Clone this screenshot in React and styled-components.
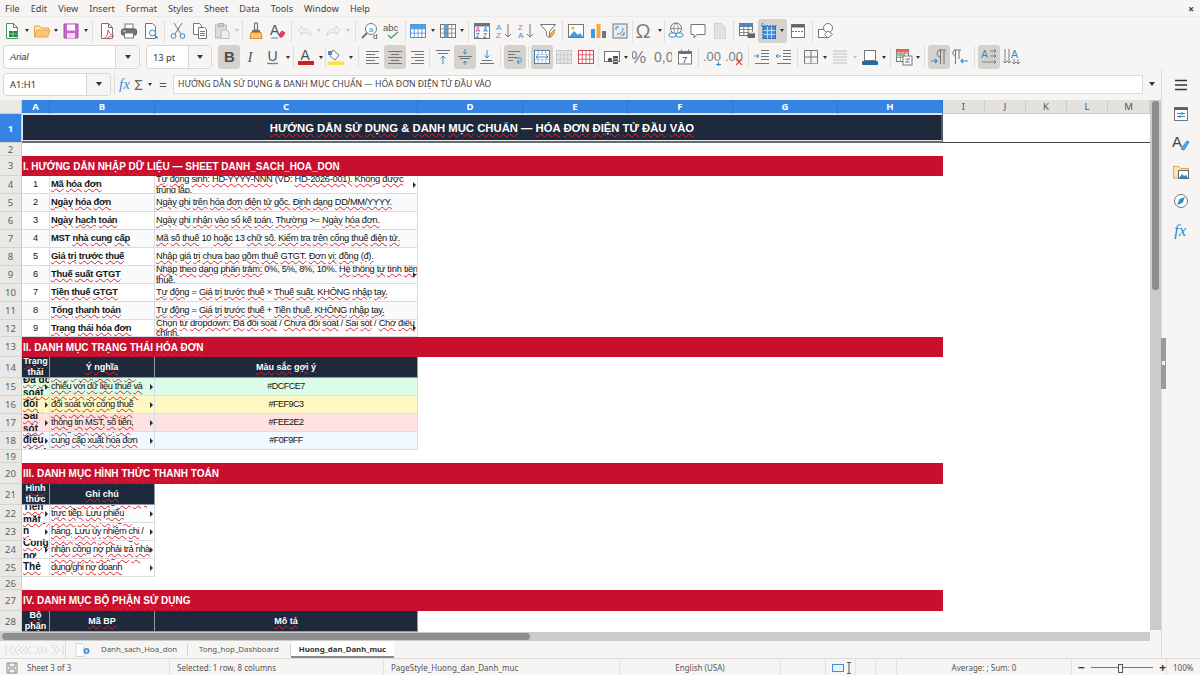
import React from "react";
import styled, { createGlobalStyle } from "styled-components";

const GlobalStyle = createGlobalStyle`
  html, body { margin: 0; padding: 0; background: #f6f5f4; }
  body { font-family: "Noto Sans", "Open Sans", sans-serif; overflow: hidden; }
  * { box-sizing: border-box; }
`;

const Window = styled.div`
  width: 1200px;
  height: 675px;
  display: flex;
  flex-direction: column;
  overflow: hidden;
  background: #f6f5f4;
  color: #3d3d3d;
`;

const MenuBar = styled.div`
  height: 17px;
  display: flex;
  align-items: center;
  padding-left: 5px;
  gap: 11px;
  font-size: 9.2px;
  color: #444;
  border-bottom: 1px solid #ecebe8;
  position: relative;
`;
const CloseMark = styled.span`
  position: absolute;
  right: 6px;
  top: 2px;
  font-size: 10px;
  font-weight: 700;
  color: #333;
`;

const ToolRow = styled.div`
  height: ${(p) => p.$h}px;
  display: flex;
  align-items: center;
  padding-left: ${(p) => p.$pad}px;
`;
const ToolBtn = styled.div`
  width: ${(p) => p.$w || 22}px;
  height: 24px;
  flex: none;
  display: flex;
  align-items: center;
  justify-content: ${(p) => (p.$w ? "flex-start" : "center")};
  padding-left: ${(p) => (p.$w ? 2 : 0)}px;
  border-radius: 3px;
  background: ${(p) => (p.$on ? "#d5d2ce" : "transparent")};
`;
const Caret = styled.span`
  flex: none;
  width: 7.5px;
  display: flex;
  justify-content: center;
  &::before {
    content: "";
    border-left: 2.5px solid transparent;
    border-right: 2.5px solid transparent;
    border-top: 3px solid ${(p) => (p.$off ? "#c4c4c4" : "#333")};
  }
`;
const ToolSep = styled.span`
  flex: none;
  width: ${(p) => p.$w}px;
  height: 22px;
  display: flex;
  justify-content: center;
  &::before {
    content: "";
    width: 1px;
    background: #e2e0dc;
  }
`;

const ComboBox = styled.div`
  width: ${(p) => p.$w}px;
  margin-right: ${(p) => p.$mr || 0}px;
  height: ${(p) => p.$h || 24}px;
  flex: none;
  display: flex;
  border: 1px solid #d8d6d2;
  border-radius: 4px;
  background: #fff;
  overflow: hidden;
`;
const ComboText = styled.div`
  flex: 1;
  display: flex;
  align-items: center;
  padding-left: ${(p) => p.$pad || 6}px;
  font-family: ${(p) => (p.$italic ? '"Liberation Sans", Arial, sans-serif' : "inherit")};
  font-style: ${(p) => (p.$italic ? "italic" : "normal")};
  font-size: 9.3px;
  color: #333;
`;
const ComboDrop = styled.div`
  width: ${(p) => p.$w}px;
  flex: none;
  display: flex;
  align-items: center;
  justify-content: center;
  background: #f6f5f4;
  border-left: 1px solid #d8d6d2;
  &::before {
    content: "";
    border-left: 3.5px solid transparent;
    border-right: 3.5px solid transparent;
    border-top: 4px solid #333;
  }
`;

const FormulaBar = styled.div`
  height: 28px;
  display: flex;
  align-items: center;
  padding: 0 0 0 3px;
  position: relative;
`;
const FormulaSep = styled.span`
  width: 1px;
  height: 20px;
  margin: 0 3px 0 3px;
  background: #dedcd8;
`;
const FormulaInput = styled.div`
  width: 970px;
  height: 19px;
  margin-left: 0.5px;
  display: flex;
  align-items: center;
  padding-left: 4px;
  background: #fff;
  border: 1px solid #dcdad6;
  font-size: 8.65px;
  color: #444;
  white-space: nowrap;
`;
const FormulaGlyph = styled.span`
  flex: none;
  width: ${(p) => p.$w}px;
  text-align: center;
  font-family: ${(p) => (p.$serif ? '"Liberation Serif", serif' : "inherit")};
  font-style: ${(p) => (p.$serif ? "italic" : "normal")};
  font-size: ${(p) => p.$size}px;
  color: ${(p) => p.$color};
`;
const FormulaEnd = styled(Caret)`
  width: 18px;
  &::before {
    border-left-width: 3.5px;
    border-right-width: 3.5px;
    border-top-width: 4px;
  }
`;

const Workspace = styled.div`
  flex: 1;
  min-height: 0;
  display: flex;
  position: relative;
  padding-top: 2px;
`;
const SheetColumn = styled.div`
  width: 1150px;
  display: flex;
  flex-direction: column;
`;
const SheetGrid = styled.div`
  height: 532px;
  flex: none;
  overflow: hidden;
  display: grid;
  background: #fff;
  grid-template-columns: 22px 28px 105px 263px repeat(5, 105px) 42px 41px 41px 41px 42px;
  grid-template-rows: 14px 29px 13px 20px repeat(8, 18px) 17px 20px 21px repeat(4, 18px) 13px 21px 21px repeat(4, 18px) 13px 21px 21px;
`;
const Corner = styled.div`
  background: #e9e8e5;
  border-right: 1px solid #cfcdc9;
  border-bottom: 1px solid #cfcdc9;
`;
const ColHead = styled.div`
  display: flex;
  align-items: center;
  justify-content: center;
  font-size: 9.6px;
  font-weight: ${(p) => (p.$on ? 700 : 400)};
  color: ${(p) => (p.$on ? "#fff" : "#555")};
  background: ${(p) => (p.$on ? "#3584e4" : "#e3e2df")};
  border-right: 1px solid ${(p) => (p.$on ? "#2f76cf" : "#cfcdc9")};
  border-bottom: 1px solid ${(p) => (p.$on ? "#cfe0f6" : "#cfcdc9")};
`;
const RowHead = styled.div`
  grid-column: 1;
  display: flex;
  align-items: center;
  justify-content: center;
  font-size: 9.6px;
  font-weight: ${(p) => (p.$on ? 700 : 400)};
  color: ${(p) => (p.$on ? "#fff" : "#5f5f5f")};
  background: ${(p) => (p.$on ? "#3584e4" : "#e9e8e5")};
  border-right: 1px solid #cfcdc9;
  border-bottom: 1px solid #d6d4d0;
`;
const TitleCell = styled.div`
  grid-column: 2 / 10;
  display: flex;
  align-items: center;
  justify-content: center;
  margin-bottom: 2px;
  background: #1e293b;
  border: 1px solid #e6ebf2;
  border-right: 2px solid #50565e;
  box-shadow: 0 2px 0 #6a6a6a;
  color: #fff;
  font-family: "Liberation Sans", Arial, sans-serif;
  font-size: 11.3px;
  font-weight: 700;
`;
const TitleRest = styled.div`
  grid-column: 10 / 15;
  border-bottom: 1px solid #444;
`;
const Band = styled.div`
  grid-column: 2 / 10;
  display: flex;
  align-items: center;
  padding-left: 1px;
  background: #c8102e;
  color: #fff;
  font-family: "Liberation Sans", Arial, sans-serif;
  font-size: 10px;
  font-weight: 700;
`;
const HeadCell = styled.div`
  display: flex;
  align-items: center;
  justify-content: center;
  text-align: center;
  overflow: hidden;
  background: #1e293b;
  border-right: 1px solid #8e99a8;
  border-bottom: 1px solid #8e99a8;
  color: #fff;
  font-family: "Liberation Sans", Arial, sans-serif;
  font-size: 9px;
  line-height: 11px;
  font-weight: 700;
`;
const Cell = styled.div`
  position: relative;
  display: flex;
  align-items: center;
  justify-content: ${(p) => (p.$center ? "center" : "flex-start")};
  text-align: ${(p) => (p.$center ? "center" : "left")};
  overflow: hidden;
  padding: 0 1px;
  background: ${(p) => p.$bg || "#fff"};
  border-right: 1px solid #d9dee5;
  border-bottom: 1px solid #d9dee5;
  color: #141414;
  font-family: "Liberation Sans", Arial, sans-serif;
  font-size: ${(p) => p.$size || 9.3}px;
  letter-spacing: ${(p) => p.$track ?? -0.29}px;
  line-height: ${(p) => p.$line || 10.5}px;
  font-weight: ${(p) => (p.$bold ? 700 : 400)};
`;
const CellText = styled.span`
  display: block;
  flex: none;
  width: ${(p) => (p.$w ? `${p.$w}px` : "100%")};
  overflow-wrap: anywhere;
`;
const Squiggle = styled.span`
  text-decoration: underline wavy #d8242c;
  text-decoration-thickness: 1px;
  text-underline-offset: 1px;
`;
const More = styled.i`
  position: absolute;
  right: 1px;
  top: 50%;
  margin-top: -3px;
  border-top: 3px solid transparent;
  border-bottom: 3px solid transparent;
  border-left: 3px solid #2c2c2c;
`;

const HScroll = styled.div`
  height: 9px;
  flex: none;
  padding: 1px 2px;
  background: #cbcbcb;
  margin-right: -1px;
`;
const HThumb = styled.div`
  width: 528px;
  height: 7px;
  border-radius: 4px;
  background: #8e8e8e;
`;
const VScroll = styled.div`
  width: 11px;
  flex: none;
  padding: 1px 2px 0;
  background: linear-gradient(to bottom, #cbcbcb 0, #cbcbcb 530px, #f6f5f4 530px);
`;
const VThumb = styled.div`
  height: 189px;
  border-radius: 3px;
  background: #8e8e8e;
`;
const SideBar = styled.div`
  flex: 1;
  display: flex;
  flex-direction: column;
  align-items: center;
  gap: 7px;
  margin-top: -30px;
  padding-top: 4px;
  border-left: 1px solid #dedcd8;
  position: relative;
`;
const SideBtn = styled.div`
  width: 24px;
  height: 22px;
  display: flex;
  align-items: center;
  justify-content: center;
`;
const SideGrip = styled.div`
  position: absolute;
  left: -1px;
  top: 268px;
  width: 5px;
  height: 51px;
  background: #9a9a9a;
  &::after {
    content: "";
    position: absolute;
    left: 1px;
    top: 23px;
    width: 3px;
    height: 4px;
    background: #f2f2f2;
  }
`;

const TabBar = styled.div`
  height: 17px;
  flex: none;
  display: flex;
  align-items: stretch;
  padding-left: 5px;
  margin-right: 38px;
  border-right: 1px solid #dedcd8;
  font-size: 7.8px;
  color: #555;
`;
const TabNav = styled.div`
  width: 60px;
  display: flex;
  align-items: center;
`;
const TabAdd = styled.div`
  width: 26px;
  display: flex;
  align-items: center;
  padding-left: 9px;
  border-left: 1px solid #dedcd8;
`;
const SheetTab = styled.div`
  display: flex;
  align-items: center;
  padding: 0 ${(p) => p.$pad}px;
  background: ${(p) => (p.$on ? "#fff" : "transparent")};
  border-bottom: 2px solid ${(p) => (p.$on ? "#8a8a8a" : "transparent")};
  font-weight: ${(p) => (p.$on ? 700 : 400)};
  color: ${(p) => (p.$on ? "#333" : "#555")};
`;
const TabSep = styled.span`
  width: 1px;
  margin: 3px 0;
  background: #d2d0cc;
`;

const StatusBar = styled.div`
  height: 17px;
  flex: none;
  display: grid;
  grid-template-columns: 170px 214px 236px 161px 45px 30px 20px 21px 175px 95px 33px;
  border-top: 1px solid #dedcd8;
  font-size: 8px;
  color: #555;
`;
const StatusCell = styled.div`
  display: flex;
  align-items: center;
  justify-content: ${(p) => (p.$center ? "center" : "flex-start")};
  gap: ${(p) => p.$gap || 0}px;
  padding-left: ${(p) => p.$pad ?? 7}px;
  border-right: ${(p) => (p.$last ? "none" : "1px solid #e4e2de")};
  white-space: nowrap;
`;
const ZoomTrack = styled.div`
  flex: 1;
  height: 1px;
  margin: 0 6px;
  background: #777;
  position: relative;
  &::after {
    content: "";
    position: absolute;
    left: 27px;
    top: -3px;
    width: 3px;
    height: 7px;
    border: 1px solid #555;
    background: #f6f5f4;
  }
`;
const ZoomSign = styled.span`
  font-size: 12px;
  font-weight: 700;
  color: #333;
`;

const Svg = ({ w = 18, h = 18, children }) => (
  <svg width={w} height={h} viewBox={`0 0 ${w} ${h}`} fill="none" stroke="#72767c" strokeWidth="1">
    {children}
  </svg>
);

const Label = ({ x, y, size, color = "#555", weight = 400, family = "Liberation Sans", italic, children }) => (
  <text x={x} y={y} fontSize={size} fill={color} stroke="none" fontWeight={weight} fontFamily={family} fontStyle={italic ? "italic" : "normal"}>
    {children}
  </text>
);

const Lines = ({ rows, color = "#72767c" }) => rows.map(([x1, y, x2], i) => <path key={i} d={`M${x1} ${y}H${x2}`} stroke={color} />);

const gridLines = (x, y, w, h, cols, rows, color) => {
  const parts = [];
  for (let i = 1; i < cols; i++) parts.push(`M${x + (w * i) / cols} ${y}v${h}`);
  for (let i = 1; i < rows; i++) parts.push(`M${x} ${y + (h * i) / rows}h${w}`);
  return <path d={parts.join("")} stroke={color} strokeWidth="0.8" />;
};

const ICONS = {
  new: (<Svg><path d="M3.5 1.5h7l4 4v11h-11z" fill="#fff" stroke="#3f9f5a" /><path d="M10.5 1.5v4h4" stroke="#3f9f5a" /><rect x="6" y="9" width="8" height="6" fill="#2f7d46" stroke="none" /><path d="M6 12h8M10 9v6" stroke="#bfe3c9" strokeWidth="0.7" /></Svg>),
  open: (<Svg><path d="M1.5 15V4h5l2 2h7v2" fill="#fde3b0" stroke="#e3a64a" /><path d="M1.5 15l2.5-7h13l-2.5 7z" fill="#fcc877" stroke="#e3a64a" /></Svg>),
  save: (<Svg><path d="M2 2h14v14H2z" fill="#c766cf" stroke="#a94db2" /><rect x="5" y="2.5" width="8" height="6" fill="#fff" stroke="none" /><rect x="5" y="11" width="8" height="5" fill="#f3d9f5" stroke="none" /></Svg>),
  pdf: (<Svg><path d="M3.5 1.5h7l4 4v11h-11z" fill="#fff" /><path d="M10.5 1.5v4h4" /><path d="M7 16c2-2 3-5 3-8 1 3 3 5 6 6-3 0-6 1-8 3" stroke="#e25050" /></Svg>),
  print: (<Svg><rect x="5" y="2" width="8" height="5" fill="#fff" /><rect x="1.5" y="7" width="15" height="6" rx="1.5" fill="#6f767d" stroke="#565c62" /><rect x="4.5" y="11" width="9" height="5" fill="#fff" /><path d="M3.5 9h2" stroke="#fff" /></Svg>),
  preview: (<Svg><path d="M3.5 1.5h7l3 3v12h-10z" fill="#fff" /><circle cx="10.5" cy="11" r="3" fill="#fff" stroke="#2e8ccf" /><path d="M12.7 13.2l3 3" stroke="#2e8ccf" strokeWidth="1.6" /></Svg>),
  cut: (<Svg><path d="M5 1l7 11M13 1l-7 11" /><circle cx="4.5" cy="14" r="2.4" stroke="#2e8ccf" /><circle cx="13.5" cy="14" r="2.4" stroke="#2e8ccf" /></Svg>),
  copy: (<Svg><path d="M2.5 1.5h6l2 2v9h-8z" fill="#fff" /><path d="M7.5 5.5h6l2 2v9h-8z" fill="#fff" /><Lines rows={[[9, 9.5, 14], [9, 11.5, 14], [9, 13.5, 14]]} color="#2e8ccf" /></Svg>),
  paste: (<Svg><rect x="2.5" y="3" width="11" height="13" fill="#dcdcdc" stroke="#b9b9b9" /><rect x="5.5" y="1.5" width="5" height="3" fill="#c9c9c9" stroke="#b0b0b0" /><path d="M8 8h6l2 2v6.5H8z" fill="#efefef" stroke="#bbb" /></Svg>),
  brush: (<Svg><rect x="7.5" y="1" width="3" height="7" fill="#e8f0f8" stroke="#6b7178" /><rect x="5" y="8" width="8" height="2" fill="#6b7178" stroke="none" /><path d="M4 10.5h10l1 6H3z" fill="#f7c27a" stroke="#d68b2a" /></Svg>),
  clear: (<Svg><Label x="1" y="13" size="14" color="#4a5560">A</Label><path d="M2 16h7" stroke="#2e8ccf" /><path d="M10 13l3-4 3 2-3 4h-2z" fill="#e8455a" stroke="#c8324a" /></Svg>),
  undo: (<Svg><path d="M3 8l4-4v3c5 0 9 2 9 7-2-3-5-4-9-4v3z" stroke="#d4d4d4" /></Svg>),
  redo: (<Svg><path d="M15 8l-4-4v3c-5 0-9 2-9 7 2-3 5-4 9-4v3z" stroke="#d4d4d4" /></Svg>),
  find: (<Svg><circle cx="10" cy="7" r="5.5" fill="#fff" /><path d="M6 11l-5 5" strokeWidth="2" /><Label x="7.7" y="9.5" size="8" color="#2e8ccf">a</Label><Label x="12" y="17" size="8" color="#444">d</Label></Svg>),
  spell: (<Svg><Label x="0" y="9" size="9.5" color="#555">abc</Label><path d="M5 13l3 3 7-6" stroke="#3cab5a" strokeWidth="1.4" /></Svg>),
  rows: (<Svg><rect x="1.5" y="2.5" width="15" height="13" fill="#fff" stroke="#4a90d9" /><rect x="1.5" y="2.5" width="15" height="4.3" fill="#5ba3e6" stroke="none" />{gridLines(1.5, 2.5, 15, 13, 4, 3, "#4a90d9")}</Svg>),
  cols: (<Svg><rect x="1.5" y="2.5" width="15" height="13" fill="#fff" /><rect x="5.2" y="2.5" width="4" height="13" fill="#5ba3e6" stroke="none" />{gridLines(1.5, 2.5, 15, 13, 4, 3, "#7a8088")}</Svg>),
  sort: (<Svg><rect x="1.5" y="1.5" width="15" height="15" fill="#fff" /><rect x="1.5" y="1.5" width="15" height="3" fill="#6e7276" stroke="none" /><Label x="2.5" y="10" size="6.5" weight={700} color="#d25ac0">A</Label><Label x="2.5" y="16" size="6.5" weight={700} color="#3f8fdc">Z</Label><Label x="10" y="10" size="6.5" weight={700} color="#3f8fdc">A</Label><Label x="10" y="16" size="6.5" weight={700} color="#d25ac0">Z</Label></Svg>),
  az: (<Svg><Label x="1" y="8" size="8" color="#3f8fdc">A</Label><Label x="1" y="16" size="8" color="#d25ac0">Z</Label><path d="M13 2v13M10 12l3 3 3-3" /></Svg>),
  za: (<Svg><Label x="1" y="8" size="8" color="#d25ac0">Z</Label><Label x="1" y="16" size="8" color="#3f8fdc">A</Label><path d="M13 2v13M10 12l3 3 3-3" /></Svg>),
  filter: (<Svg><path d="M1.5 2.5h15l-6 7v6l-3-2v-4z" fill="#fff" /><path d="M11 16l1-5 4-4-1 5z" fill="#f6b04d" stroke="#e49a30" /></Svg>),
  image: (<Svg><rect x="1.5" y="2.5" width="15" height="13" fill="#fff" /><path d="M2 15l5-6 4 4 2-2 3 4z" fill="#3f9ae0" stroke="none" /><circle cx="6" cy="6" r="1.6" fill="#f4a93c" stroke="none" /></Svg>),
  chart: (<Svg><rect x="2" y="7" width="4" height="9" fill="#3f9ae0" stroke="none" /><rect x="7.5" y="2" width="4" height="14" fill="#f4a93c" stroke="none" /><rect x="13" y="9" width="4" height="7" fill="#6f757b" stroke="none" /></Svg>),
  pivot: (<Svg><rect x="2" y="2" width="14" height="14" fill="#ececec" /><path d="M5 5v3M5 5h3M13 13v-3M13 13h-3M6 12c4 0 6-2 6-6" stroke="#2e8ccf" /></Svg>),
  omega: (<Svg><Label x="-0.5" y="16" size="20" color="#7a7e84">Ω</Label></Svg>),
  link: (<Svg><circle cx="9" cy="6.5" r="5.5" /><path d="M3.5 6.5h11M9 1c-3 3-3 8 0 11M9 1c3 3 3 8 0 11" strokeWidth="0.7" /><rect x="2" y="11" width="7" height="4" rx="2" fill="#fff" stroke="#2e8ccf" /><rect x="9" y="11" width="7" height="4" rx="2" fill="#fff" stroke="#2e8ccf" /></Svg>),
  comment: (<Svg><path d="M2 2.5h14v10H8l-3 3.5v-3.5H2z" fill="#fff" /></Svg>),
  header: (<Svg><path d="M3.5 1.5h7l4 4v11h-11z" fill="#e2e2e2" stroke="#d0d0d0" /></Svg>),
  printArea: (<Svg><rect x="1.5" y="1.5" width="13" height="12" fill="#fff" /><rect x="1.5" y="1.5" width="13" height="3" fill="#3f8fdc" stroke="none" />{gridLines(1.5, 1.5, 13, 12, 3, 4, "#5f6d7a")}<rect x="9.5" y="11" width="7.5" height="5" rx="1" fill="#666" stroke="none" /><rect x="11" y="9.5" width="4.5" height="2" fill="#ddd" stroke="none" /></Svg>),
  freeze: (<Svg><rect x="3.5" y="4.5" width="12" height="12" fill="#3f8fdc" stroke="#2a75bc" />{gridLines(3.5, 4.5, 12, 12, 3, 3, "#dcecf9")}<path d="M1 3.5h16M2.5 1v16" stroke="#2f86d6" strokeDasharray="1.6 1.2" /></Svg>),
  freezeRows: (<Svg><rect x="2.5" y="2.5" width="13" height="13" fill="#fff" /><rect x="2.5" y="2.5" width="13" height="3" fill="#5f6468" stroke="none" /><path d="M3 9.5h12" stroke="#2e8ccf" strokeDasharray="2 1" /></Svg>),
  shapes: (<Svg><rect x="1.5" y="7.5" width="8" height="8" fill="#fff" /><circle cx="11" cy="6" r="4.5" fill="#fff" /><path d="M11 9l4.5 3.5L11 16l-3.5-3.5z" fill="#fff" /></Svg>),
  bold: (<Svg><Label x="4" y="14" size="15" weight={700} color="#4c4c4c">B</Label></Svg>),
  italic: (<Svg><Label x="5.5" y="14" size="15" italic family="Liberation Serif" color="#555">I</Label></Svg>),
  under: (<Svg><Label x="3.5" y="13" size="14" color="#555">U</Label><path d="M3 15.5h11" stroke="#3f8fdc" strokeWidth="1.4" /></Svg>),
  fontColor: (<Svg><Label x="3.5" y="12" size="14" color="#4c4c4c">A</Label><rect x="1" y="13" width="16" height="4" fill="#c9211e" stroke="none" /></Svg>),
  bgColor: (<Svg><path d="M6 2l6 5-4 5-5-4z" fill="#fff" /><rect x="1" y="3" width="4" height="4" fill="#3f8fdc" stroke="none" /><rect x="1" y="13.5" width="16" height="3.5" fill="#f5e642" stroke="none" /></Svg>),
  left: (<Svg><Lines rows={[[2, 3.5, 15], [2, 6.5, 11], [2, 9.5, 15], [2, 12.5, 11], [2, 15.5, 15]]} /></Svg>),
  center: (<Svg><Lines rows={[[2, 3.5, 16], [5, 6.5, 13], [2, 9.5, 16], [5, 12.5, 13], [2, 15.5, 16]]} /></Svg>),
  right: (<Svg><Lines rows={[[3, 3.5, 16], [7, 6.5, 16], [3, 9.5, 16], [7, 12.5, 16], [3, 15.5, 16]]} /></Svg>),
  top: (<Svg><Lines rows={[[2, 2.5, 16], [4, 5.5, 14]]} /><path d="M9 16V8M6.5 10.5L9 8l2.5 2.5" stroke="#2e8ccf" /></Svg>),
  middle: (<Svg><Lines rows={[[2, 8.5, 16], [4, 10.5, 14]]} /><path d="M9 1v5M7 4l2 2 2-2M9 17v-4M7 15l2-2 2 2" stroke="#2e8ccf" /></Svg>),
  bottom: (<Svg><Lines rows={[[4, 12.5, 14], [2, 15.5, 16]]} /><path d="M9 2v8M6.5 7.5L9 10l2.5-2.5" stroke="#2e8ccf" /></Svg>),
  wrap: (<Svg><Lines rows={[[2, 3.5, 14], [2, 6.5, 9], [2, 9.5, 11], [2, 12.5, 7]]} /><path d="M9 10h5c2 0 2 4 0 4h-3M13 12l-2 2 2 2" stroke="#2e8ccf" /></Svg>),
  merge: (<Svg><rect x="1.5" y="2.5" width="15" height="13" fill="#fff" stroke="#4f7fae" />{gridLines(1.5, 2.5, 15, 13, 4, 3, "#8aa0b5")}<rect x="2" y="6.8" width="14" height="4.3" fill="#fff" stroke="none" /><path d="M3 9h12M5 7.3L3 9l2 1.7M13 7.3L15 9l-2 1.7" stroke="#2e8ccf" /></Svg>),
  unmerge: (<Svg><rect x="1.5" y="2.5" width="15" height="13" fill="#e6e6e6" stroke="#c6c6c6" />{gridLines(1.5, 2.5, 15, 13, 4, 3, "#c6c6c6")}</Svg>),
  splitTable: (<Svg><rect x="1.5" y="2.5" width="15" height="13" fill="#fff" stroke="#c84a4a" />{gridLines(1.5, 2.5, 15, 13, 4, 3, "#c84a4a")}</Svg>),
  money: (<Svg><rect x="1.5" y="3.5" width="15" height="10" fill="#fff" /><circle cx="7" cy="12" r="2.2" fill="#555" stroke="none" /><rect x="10" y="8" width="5" height="8" fill="#555" stroke="none" /><path d="M10 11h5M10 13.5h5" stroke="#fff" strokeWidth="0.7" /></Svg>),
  percent: (<Svg><Label x="-1" y="15" size="17" color="#7a7e84">%</Label></Svg>),
  number: (<Svg><Label x="0" y="14" size="14" color="#7a7e84">0,0</Label></Svg>),
  date: (<Svg><rect x="2.5" y="3.5" width="13" height="12.5" fill="#fff" /><path d="M2.5 3.5h13v2h-13zM5.5 1.5v3M12.5 1.5v3" fill="#666a70" /><Label x="6" y="14.5" size="9.5" color="#444">7</Label></Svg>),
  addDec: (<Svg><Label x="0" y="13" size="13" color="#7a7e84">.00</Label><path d="M13 16.5h5M15.5 14v5" stroke="#2e8ccf" strokeWidth="1.2" /></Svg>),
  delDec: (<Svg><Label x="0" y="13" size="13" color="#7a7e84">.00</Label><path d="M11 11l6 6M17 11l-6 6" stroke="#e0443c" strokeWidth="1.1" /></Svg>),
  indent: (<Svg><Lines rows={[[8, 2.5, 16], [8, 5.5, 16], [8, 8.5, 16], [8, 11.5, 16], [2, 15.5, 16]]} /><path d="M1 8h5M4 6l2 2-2 2" stroke="#2e8ccf" /></Svg>),
  outdent: (<Svg><Lines rows={[[8, 2.5, 16], [8, 5.5, 16], [8, 8.5, 16], [8, 11.5, 16], [2, 15.5, 16]]} /><path d="M6 8H1M3 6L1 8l2 2" stroke="#2e8ccf" /></Svg>),
  borders: (<Svg><path d="M2.5 2.5h13v13h-13zM9 2.5v13M2.5 9h13" /><path d="M2.5 15.5h13" stroke="#e69a3c" /></Svg>),
  borderStyle: (<Svg><Lines rows={[[2, 3, 16], [2, 6, 16], [2, 9, 16], [2, 12, 16], [2, 15, 16]]} color="#bdbdbd" /></Svg>),
  borderColor: (<Svg><rect x="3.5" y="2.5" width="11" height="10" fill="#fff" /><rect x="1" y="13" width="16" height="4" rx="1" fill="#1f6aa8" stroke="none" /></Svg>),
  cond: (<Svg><rect x="1.5" y="1.5" width="12" height="12" fill="#fff" />{gridLines(1.5, 1.5, 12, 12, 3, 3, "#888")}<rect x="1.5" y="1.5" width="12" height="3" fill="#e56a5a" stroke="none" /><rect x="1.5" y="5.5" width="8" height="3" fill="#8cc68f" stroke="none" /><rect x="8" y="8" width="9" height="9" fill="#fff" /><path d="M10 11h5M10 14h5M14 10l-3 5" strokeWidth="0.8" /></Svg>),
  ltr: (<Svg><path d="M9 2h7M10.5 2v14M14 2v14M10.5 2C6 2 6 9 10.5 9" /><path d="M1 13h6M5 11l2 2-2 2" stroke="#2e8ccf" strokeWidth="1.2" /></Svg>),
  rtl: (<Svg><path d="M2 2h7M3.5 2v14M7 2v9M3.5 2C0 2 0 8 3.5 8" /><path d="M9 13h7M11 11l-2 2 2 2" stroke="#2e8ccf" strokeWidth="1.2" /></Svg>),
  textH: (<Svg><Label x="1" y="10" size="10.5" color="#2e8ccf">A</Label><path d="M10 3h6M14 1l2 2-2 2M10 8h6M14 6l2 2-2 2M2 14h14M14 12l2 2-2 2" strokeWidth="0.9" /></Svg>),
  textV: (<Svg><Label x="9" y="10" size="10.5" color="#2e8ccf">A</Label><path d="M3 1v14M1 13l2 2 2-2M7 1v14M5 13l2 2 2-2M12 11v5M10 14l2 2 2-2M16 11v5M14 14l2 2 2-2" strokeWidth="0.9" /></Svg>),
};

const ToolList = ({ items }) =>
  items.map((item, i) => {
    if (typeof item === "number") return <ToolSep key={i} $w={item} />;
    if (item === ">") return <Caret key={i} />;
    if (item === "~") return <Caret key={i} $off />;
    if (item.endsWith("*+"))
      return (
        <ToolBtn key={i} $on $w={29}>
          {ICONS[item.slice(0, -2)]}
          <Caret />
        </ToolBtn>
      );
    if (item.endsWith("*")) return <ToolBtn key={i} $on>{ICONS[item.slice(0, -1)]}</ToolBtn>;
    return <ToolBtn key={i}>{ICONS[item]}</ToolBtn>;
  });

const TOOLS_TOP = [
  "new", ">", "open", ">", "save", ">", 6.5, "pdf", "print", "preview", 5, "cut", "copy", "paste", "~", 4.5,
  "brush", "clear", 4, "undo", "~", "redo", "~", 7, "find", "spell", 4, "rows", ">", "cols", ">", 5,
  "sort", "az", "za", "filter", 6, "image", "chart", "pivot", 3, "omega", ">", 1.5, "link", "comment", "header", 5,
  "printArea", "freeze*+", "freezeRows", 6, "shapes",
];
const TOOLS_FORMAT = [
  "bold*", "italic", "under", ">", 3.5, "fontColor", ">", 0.5, "bgColor", ">", 7, "left", "center*", "right", 4,
  "top", "middle*", "bottom", 6, "wrap*", 5, "merge*", "unmerge", "splitTable", 4, "money", ">", "percent", "number", "date", 5,
  "addDec", "delDec", 6, "indent", "outdent", 4.5, "borders", ">", "borderStyle", "~", "borderColor", ">", 4.5,
  "cond", ">", 5.5, "ltr*", "rtl", 6, "textH*", "textV",
];

const CLEAN_WORD = /^[\d%.,()=×+/—&#>:-]*$|^(MST|SHEET|\(VD:|I\.|II\.|III\.|IV\.)$/;

const spell = (text) =>
  text.split(/(\s+)/).map((word, i) => (word.trim() === "" || CLEAN_WORD.test(word) ? word : <Squiggle key={i}>{word}</Squiggle>));

const TITLE = "HƯỚNG DẪN SỬ DỤNG & DANH MỤC CHUẨN — HÓA ĐƠN ĐIỆN TỬ ĐẦU VÀO";

const GUIDE = [
  ["Mã hóa đơn", "Tự động sinh: HD-YYYY-NNN (VD: HD-2026-001). Không được trùng lặp.", true],
  ["Ngày hóa đơn", "Ngày ghi trên hóa đơn điện tử gốc. Định dạng DD/MM/YYYY."],
  ["Ngày hạch toán", "Ngày ghi nhận vào sổ kế toán. Thường >= Ngày hóa đơn."],
  ["MST nhà cung cấp", "Mã số thuế 10 hoặc 13 chữ số. Kiểm tra trên cổng thuế điện tử."],
  ["Giá trị trước thuế", "Nhập giá trị chưa bao gồm thuế GTGT. Đơn vị: đồng (đ)."],
  ["Thuế suất GTGT", "Nhập theo dạng phần trăm: 0%, 5%, 8%, 10%. Hệ thống tự tính tiền thuế.", true],
  ["Tiền thuế GTGT", "Tự động = Giá trị trước thuế × Thuế suất. KHÔNG nhập tay."],
  ["Tổng thanh toán", "Tự động = Giá trị trước thuế + Tiền thuế. KHÔNG nhập tay."],
  ["Trạng thái hóa đơn", "Chọn từ dropdown: Đã đối soát / Chưa đối soát / Sai sót / Chờ điều chỉnh.", true],
];

// no-break spaces keep the lines breaking where the sheet breaks them
const STATES = [
  ["Đã đối soát", "Số liệu hóa đơn đã đối chiếu\u00a0với dữ liệu thuế và cổng\u00a0thuế", "#DCFCE7", "#dcfce7"],
  ["Chưa đối soát", "Hóa đơn chưa hoàn tất đối\u00a0soát với cổng thuế điện\u00a0tử", "#FEF9C3", "#fef9c3"],
  ["Sai sót", "Hóa đơn có sai sót về thông\u00a0tin MST, số tiền, thuế\u00a0suất", "#FEE2E2", "#fee2e2"],
  ["Chờ điều chỉnh", "Đang chờ đơn vị nhà cung\u00a0cấp xuất hóa đơn điều\u00a0chỉnh", "#F0F9FF", "#f0f9ff"],
];

const PAYMENTS = [
  ["Tiền mặt", "Thanh toán bằng tiền mặt trực\u00a0tiếp. Lưu phiếu thanh\u00a0toán", true],
  ["Chuyển khoản", "Thanh toán qua ngân hàng.\u00a0Lưu ủy nhiệm chi / sao\u00a0kê", true],
  ["Công nợ", "Chưa thanh toán — ghi nhận\u00a0công nợ phải trả nhà cung\u00a0cấp", true],
  ["Thẻ", "Thanh toán bằng thẻ tín dụng/ghi\u00a0nợ doanh nghiệp\u00a0cấp.", false],
];

const COLS = ["A", "B", "C", "D", "E", "F", "G", "H", "I", "J", "K", "L", "M"];

const Sheet = () => (
  <SheetGrid>
    <Corner />
    {COLS.map((c, i) => (
      <ColHead key={c} $on={i < 8}>{c}</ColHead>
    ))}

    <RowHead $on>1</RowHead>
    <TitleCell><span>{spell(TITLE)}</span></TitleCell>
    <TitleRest />

    <RowHead>2</RowHead>
    <RowHead>3</RowHead>
    <Band><span>{spell("I. HƯỚNG DẪN NHẬP DỮ LIỆU — SHEET DANH_SACH_HOA_DON")}</span></Band>

    {GUIDE.map(([name, note, more], i) => (
      <React.Fragment key={name}>
        <RowHead>{i + 4}</RowHead>
        <Cell $center $bg={i % 2 ? "#f8fafc" : "#fff"} $size={9.2} $track={0}>{i + 1}</Cell>
        <Cell $bold $bg={i % 2 ? "#f8fafc" : "#fff"} $size={9.4} $track={-0.25}><CellText>{spell(name)}</CellText></Cell>
        <Cell $bg={i % 2 ? "#f8fafc" : "#fff"}>
          <CellText $w={266}>{spell(note)}</CellText>
          {more && <More />}
        </Cell>
      </React.Fragment>
    ))}

    <RowHead>13</RowHead>
    <Band><span>{spell("II. DANH MỤC TRẠNG THÁI HÓA ĐƠN")}</span></Band>
    <RowHead>14</RowHead>
    <HeadCell><span>{spell("Trạng thái")}</span></HeadCell>
    <HeadCell><span>{spell("Ý nghĩa")}</span></HeadCell>
    <HeadCell><span>{spell("Màu sắc gợi ý")}</span></HeadCell>
    {STATES.map(([name, note, hex, bg], i) => (
      <React.Fragment key={name}>
        <RowHead>{i + 15}</RowHead>
        <Cell $bold $bg={bg} $size={10} $track={0} $line={12.5}><CellText $w={31}>{spell(name)}</CellText><More /></Cell>
        <Cell $bg={bg} $size={9.4} $track={-0.45} $line={12.5}><CellText>{spell(note)}</CellText><More /></Cell>
        <Cell $center $bg={bg} $size={9} $track={-0.5}>{hex}</Cell>
      </React.Fragment>
    ))}

    <RowHead>19</RowHead>
    <RowHead>20</RowHead>
    <Band><span>{spell("III. DANH MỤC HÌNH THỨC THANH TOÁN")}</span></Band>
    <RowHead>21</RowHead>
    <HeadCell><span>{spell("Hình thức")}</span></HeadCell>
    <HeadCell><span>{spell("Ghi chú")}</span></HeadCell>
    {PAYMENTS.map(([name, note, more], i) => (
      <React.Fragment key={name}>
        <RowHead>{i + 22}</RowHead>
        <Cell $bold $size={10} $track={0} $line={12.5} $bg={i % 2 ? "#fff" : "#fbfcfd"}><CellText $w={31}>{spell(name)}</CellText>{more && <More />}</Cell>
        <Cell $size={9.4} $track={-0.45} $line={12.5} $bg={i % 2 ? "#fff" : "#fbfcfd"}><CellText>{spell(note)}</CellText><More /></Cell>
      </React.Fragment>
    ))}

    <RowHead>26</RowHead>
    <RowHead>27</RowHead>
    <Band><span>{spell("IV. DANH MỤC BỘ PHẬN SỬ DỤNG")}</span></Band>
    <RowHead>28</RowHead>
    <HeadCell><span>{spell("Bộ phận")}</span></HeadCell>
    <HeadCell><span>{spell("Mã BP")}</span></HeadCell>
    <HeadCell><span>{spell("Mô tả")}</span></HeadCell>
  </SheetGrid>
);

const SideIcons = [
  <Svg key="menu"><path d="M3 4.5h12M3 9h12M3 13.5h12" stroke="#333" strokeWidth="1.5" /></Svg>,
  <Svg key="props"><rect x="2.5" y="2.5" width="13" height="13" fill="#fff" /><rect x="2.5" y="2.5" width="13" height="2.5" fill="#5a5f64" stroke="none" /><path d="M5 8.5h8M5 11.5h8" stroke="#2e8ccf" /><path d="M10 7v3M8 10v3" stroke="#2e8ccf" /></Svg>,
  <Svg key="styles"><Label x="0" y="13" size="15" color="#444">A</Label><path d="M9 15l6-8 2 1-5 8z" fill="#5aa6e0" stroke="#2e8ccf" /></Svg>,
  <Svg key="gallery"><path d="M1.5 15V3.5h5l2 2h8V15z" fill="#fde3b0" stroke="#e3a64a" /><rect x="6.5" y="7.5" width="10" height="8" fill="#fff" stroke="#5a6a78" /><path d="M7 15l3-4 2 2 2-1 2 3z" fill="#2e8ccf" stroke="none" /></Svg>,
  <Svg key="nav"><circle cx="9" cy="9" r="6.5" fill="#fff" /><path d="M13 5l-2.5 6-5.5 2 2.5-6z" fill="#2e8ccf" stroke="none" /></Svg>,
  <Svg key="fx"><Label x="2" y="15" size="17" italic family="Liberation Serif" color="#2e8ccf">fx</Label></Svg>,
];

export default function App() {
  return (
    <Window>
      <GlobalStyle />
      <MenuBar>
        {["File", "Edit", "View", "Insert", "Format", "Styles", "Sheet", "Data", "Tools", "Window", "Help"].map((m) => (
          <span key={m}>{m}</span>
        ))}
        <CloseMark>×</CloseMark>
      </MenuBar>

      <ToolRow $h={27} $pad={1}>
        <ToolList items={TOOLS_TOP} />
      </ToolRow>

      <ToolRow $h={26} $pad={3}>
        <ComboBox $w={137} $mr={6}>
          <ComboText $italic>Arial</ComboText>
          <ComboDrop $w={24} />
        </ComboBox>
        <ComboBox $w={66} $mr={6}>
          <ComboText>13 pt</ComboText>
          <ComboDrop $w={23} />
        </ComboBox>
        <ToolList items={TOOLS_FORMAT} />
      </ToolRow>

      <FormulaBar>
        <ComboBox $w={108} $h={23}>
          <ComboText>A1:H1</ComboText>
          <ComboDrop $w={24} />
        </ComboBox>
        <FormulaSep />
        <FormulaGlyph $w={13} $serif $size={15} $color="#3f8fdc">fx</FormulaGlyph>
        <FormulaGlyph $w={15} $size={15} $color="#666">Σ</FormulaGlyph>
        <Caret />
        <FormulaGlyph $w={19} $size={14} $color="#555">=</FormulaGlyph>
        <FormulaInput>{TITLE}</FormulaInput>
        <FormulaEnd />
      </FormulaBar>

      <Workspace>
        <SheetColumn>
          <Sheet />
          <HScroll>
            <HThumb />
          </HScroll>
        </SheetColumn>
        <VScroll>
          <VThumb />
        </VScroll>
        <SideBar>
          {SideIcons.map((icon) => (
            <SideBtn key={icon.key}>{icon}</SideBtn>
          ))}
          <SideGrip />
        </SideBar>
      </Workspace>

      <TabBar>
        <TabNav>
          <svg width="60" height="14" viewBox="0 0 60 14" fill="none" stroke="#d6d6d6">
            <path d="M1 2v10M9 2L4 7l5 5M14 2l-5 5 5 5M18 3l-4 4 4 4M22 3l-4 4 4 4M26 3l-4 4 4 4M30 3l4 4-4 4M34 3l4 4-4 4M38 3l4 4-4 4M46 2l5 5-5 5M50 2l5 5-5 5M58 2v10" />
          </svg>
        </TabNav>
        <TabAdd>
          <svg width="16" height="14" viewBox="0 0 16 14" fill="none">
            <path d="M1 .5h6l2 2v11H1z" fill="#fff" stroke="#d5d5d5" />
            <circle cx="11.5" cy="8" r="3" fill="#3f8fdc" />
            <path d="M10 8h3M11.5 6.5v3" stroke="#fff" strokeWidth="0.8" />
          </svg>
        </TabAdd>
        <SheetTab $pad={10}>Danh_sach_Hoa_don</SheetTab>
        <TabSep />
        <SheetTab $pad={11}>Tong_hop_Dashboard</SheetTab>
        <TabSep />
        <SheetTab $pad={8} $on>Huong_dan_Danh_muc</SheetTab>
      </TabBar>

      <StatusBar>
        <StatusCell $gap={9} $pad={6}>
          <svg width="12" height="12" viewBox="0 0 12 12" fill="none" stroke="#8a8a8a">
            <path d="M1 1h10v10H1zM3 1v4h6V1M3 11V7h6v4" />
          </svg>
          Sheet 3 of 3
        </StatusCell>
        <StatusCell>Selected: 1 row, 8 columns</StatusCell>
        <StatusCell>PageStyle_Huong_dan_Danh_muc</StatusCell>
        <StatusCell $center $pad={0}>English (USA)</StatusCell>
        <StatusCell />
        <StatusCell $pad={6}>
          <svg width="22" height="12" viewBox="0 0 22 12" fill="none">
            <rect x="0.5" y="2.5" width="11" height="7" fill="#e8f2fa" stroke="#3f8fdc" />
            <path d="M15 .5h4M15 11.5h4M17 .5v11" stroke="#555" />
          </svg>
        </StatusCell>
        <StatusCell />
        <StatusCell />
        <StatusCell $center $pad={0}>Average: ; Sum: 0</StatusCell>
        <StatusCell $pad={6}>
          <ZoomSign>−</ZoomSign>
          <ZoomTrack />
          <ZoomSign>+</ZoomSign>
        </StatusCell>
        <StatusCell $last $pad={6}>100%</StatusCell>
      </StatusBar>
    </Window>
  );
}
